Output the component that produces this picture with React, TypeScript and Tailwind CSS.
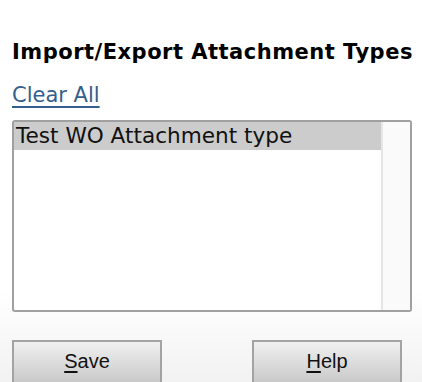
export default function App() {
  return (
    <div
      className="h-[382px] w-[422px] overflow-hidden bg-[linear-gradient(to_bottom,#ffffff_0px,#ffffff_290px,#f2f2f2_382px)] pl-[12px]"
      style={{ fontFamily: '"DejaVu Sans", Verdana, sans-serif' }}
    >
      <h1 className="pt-[39px] text-[21px] font-bold leading-[26px] tracking-[0.5px] text-black whitespace-nowrap">
        Import/Export Attachment Types
      </h1>
      <a href="#" className="mt-[17px] block w-fit text-[21px] leading-[26px] text-[#355e8c] underline underline-offset-[4px]">
        Clear All
      </a>
      <div className="mt-[12px] flex h-[192px] w-[400px] rounded-[3px] border-2 border-[#a0a0a0] bg-white">
        <div className="flex-1">
          <div className="h-[28px] bg-[#cccccc] pl-[2px] text-[21.6px] leading-[28px] text-[#111]">
            Test WO Attachment type
          </div>
        </div>
        <div className="w-[29px] border-l-2 border-[#e6e6e6] bg-[#fafafa]" />
      </div>
      <div
        className="mt-[28px] flex gap-[90px]"
        style={{ fontFamily: '"Liberation Sans", Arial, sans-serif' }}
      >
        <button className="h-[50px] w-[150px] border-2 border-[#a3a3a3] bg-[linear-gradient(to_bottom,#f0f0f0,#c4c4c4)] pb-[8px] text-[20px] text-[#111]">
          <span className="underline underline-offset-[3px]">S</span>ave
        </button>
        <button className="h-[50px] w-[150px] border-2 border-[#a3a3a3] bg-[linear-gradient(to_bottom,#f0f0f0,#c4c4c4)] pb-[8px] text-[20px] text-[#111]">
          <span className="underline underline-offset-[3px]">H</span>elp
        </button>
      </div>
    </div>
  );
}
